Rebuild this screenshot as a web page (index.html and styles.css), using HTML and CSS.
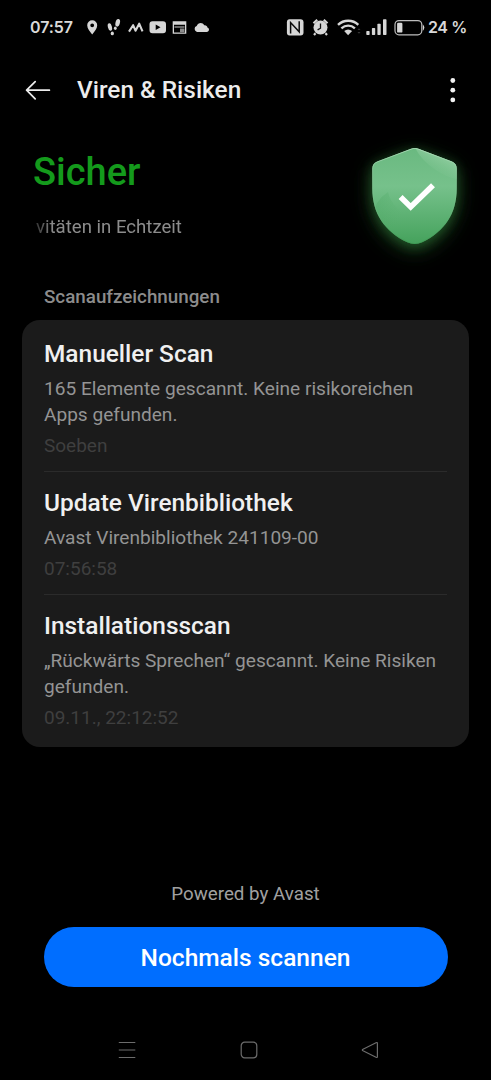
FILE: index.html
```html
<!DOCTYPE html>
<html lang="de">
<head>
<meta charset="utf-8">
<meta name="viewport" content="width=device-width, initial-scale=1">
<title>Viren &amp; Risiken</title>
<link rel="stylesheet" href="styles.css">
</head>
<body>
<div class="screen">
  <div class="status">
    <span class="clock">07:57</span>
    <svg class="status-left" width="126" height="24" viewBox="86 15 126 24" fill="#d6d6d6">
      <path fill-rule="evenodd" d="M92.200 20.200a5 5 0 0 1 5 5c0 3.300-2.700 6-5 9.200-2.300-3.200-5-5.900-5-9.200a5 5 0 0 1 5-5zm0 3.200a1.900 1.900 0 1 0 0 3.800 1.900 1.900 0 0 0 0-3.800z"/>
      <g>
        <ellipse cx="117.700" cy="22.800" rx="2.200" ry="3.900" transform="rotate(14 117.700 22.800)"/>
        <ellipse cx="115.300" cy="28.200" rx="1.400" ry="1.700"/>
        <ellipse cx="109.900" cy="27" rx="2" ry="3.900" transform="rotate(-14 109.900 27)"/>
        <ellipse cx="112.300" cy="33.400" rx="1.600" ry="1.900"/>
      </g>
      <path d="M129 31.600l4.100-6.400 2.400 5.500 3.700-7 3.300 7.600" fill="none" stroke="#d6d6d6" stroke-width="2.100" stroke-linejoin="round"/>
      <path fill-rule="evenodd" d="M152.500 21.300h10.500q3 0 3 3v6q0 3-3 3h-10.500q-3 0-3-3v-6q0-3 3-3zm3.200 3.300v5.400l4.800-2.700z"/>
      <path fill-rule="evenodd" d="M172.700 21.200h13.600v12.500h-13.600zm1.300 3.600v7.600h11v-7.600z"/>
      <path d="M174.500 26.200h10v1.500h-10zM180 28.500h4.500v3.400h-4.500z" opacity=".65"/>
      <path d="M197 31.900a3 3 0 0 1-.3-5.800c1.200-3.800 6-4.200 7.500-.9 1.900-.3 2.900.8 3.200 2.200 1.400.5 1.600 1.600 1.600 2.200 0 1.500-1 2.300-2.300 2.300z"/>
    </svg>
    <svg class="status-right" width="140" height="24" viewBox="285 15 140 24" fill="#d6d6d6">
      <path d="M289.500 19.200h11q3 0 3 3v10.200q0 3-3 3h-11q-2.600 0-2.600-3V22.200q0-3 2.600-3z"/>
      <path d="M290.600 33.400V22.600l8.600 9.200V21.200" fill="none" stroke="#0a0a0a" stroke-width="1.500"/>
      <circle cx="320.500" cy="27.600" r="7"/>
      <path d="M313.500 23.200l3.700-3.400M327.500 23.200l-3.700-3.400M315.500 33.300l-1.500 1.700M325.500 33.300l1.500 1.700" stroke="#d6d6d6" stroke-width="2.200"/>
      <path d="M320.500 23.400v4.800l-2.900 1.700" fill="none" stroke="#111" stroke-width="1.300"/>
      <path d="M338 24.800c5.700-5.500 14.700-5.500 20.300 0M341.400 28.300c4-3.600 9.600-3.600 13.500 0" fill="none" stroke="#d6d6d6" stroke-width="2.400"/>
      <path d="M344.200 31q3.900-3 7.900 0l-4 4.200z"/>
      <path d="M357.500 30l1.500-1.800 1.500 1.800zM357.500 32l1.500 1.800 1.500-1.800z" opacity=".25"/>
      <rect x="366.300" y="31" width="3.300" height="4" rx=".7"/>
      <rect x="371.900" y="28" width="3.300" height="7" rx=".7"/>
      <rect x="377.400" y="23.700" width="3.300" height="11.300" rx=".7"/>
      <rect x="383" y="19.300" width="3.500" height="15.700" rx=".7"/>
      <rect x="395" y="20.600" width="26.800" height="14.200" rx="4" fill="none" stroke="#bdbdbd" stroke-width="1.200"/>
      <rect x="397.100" y="22.800" width="5.300" height="9.800" rx="1.200"/>
      <path d="M422.800 24.200q3 3.300 0 6.700z"/>
    </svg>
    <span class="percent">24 %</span>
  </div>

  <header class="bar">
    <svg class="back" width="26" height="22" viewBox="0 0 26 22" fill="none" stroke="#ececec" stroke-width="1.700" stroke-linecap="round" stroke-linejoin="round"><path d="M10.200 2.600L1.600 11.200l8.600 8.600M1.600 11.200h22.800"/></svg>
    <h1 class="bar-title">Viren &amp; Risiken</h1>
    <svg class="more" width="8" height="26" viewBox="0 0 8 26" fill="#f2f2f2"><circle cx="3.800" cy="3.500" r="2.400"/><circle cx="3.800" cy="13.200" r="2.400"/><circle cx="3.800" cy="22.900" r="2.400"/></svg>
  </header>

  <section class="hero">
    <div class="hero-text">
      <div class="state">Sicher</div>
      <div class="ticker">vitäten in Echtzeit</div>
    </div>
    <svg class="shield" width="141" height="144" viewBox="350 126 141 144">
      <defs>
        <linearGradient id="body" x1="0" y1="0" x2="0" y2="1">
          <stop offset="0" stop-color="#6ab980"/><stop offset=".4" stop-color="#76c18b"/><stop offset="1" stop-color="#45a25c"/>
        </linearGradient>
        <linearGradient id="facet" gradientUnits="userSpaceOnUse" x1="437" y1="153" x2="427" y2="174">
          <stop offset="0" stop-color="#9ad3a8" stop-opacity=".7"/><stop offset="1" stop-color="#7cc38f" stop-opacity="0"/>
        </linearGradient>
        <linearGradient id="low" gradientUnits="userSpaceOnUse" x1="374" y1="204" x2="400" y2="218">
          <stop offset="0" stop-color="#3f9f58" stop-opacity=".25"/><stop offset="1" stop-color="#4caa62" stop-opacity="0"/>
        </linearGradient>
        <linearGradient id="edge" x1="0" y1="0" x2="0" y2="1">
          <stop offset="0" stop-color="#b4dfbf" stop-opacity=".9"/><stop offset=".4" stop-color="#8ccb9c" stop-opacity=".5"/><stop offset="1" stop-color="#3b9852" stop-opacity=".7"/>
        </linearGradient>
        <filter id="wide" x="-60%" y="-60%" width="220%" height="220%"><feGaussianBlur stdDeviation="11"/></filter>
        <filter id="near" x="-40%" y="-40%" width="180%" height="180%"><feGaussianBlur stdDeviation="6"/></filter>
        <path id="outline" d="M411 148.800q3.700-1.700 7.400 0l33.500 12.600q4.800 1.900 4.800 7v20c0 25-12 43-34.500 53.800q-7.500 3.400-15 0C384.700 231.400 372.300 213.400 372.300 188.400v-20q0-5.100 4.800-7z"/>
        <clipPath id="cut"><use href="#outline"/></clipPath>
      </defs>
      <use href="#outline" fill="#2a6a2d" opacity=".6" filter="url(#wide)" transform="translate(0 6)"/>
      <use href="#outline" fill="#2d7d3a" opacity=".5" filter="url(#near)" transform="translate(0 3)"/>
      <use href="#outline" fill="url(#body)"/>
      <g clip-path="url(#cut)">
        <path d="M414.700 147q6 13 21 23 12 8 22 9v-32z" fill="url(#facet)"/>
        <path d="M372 218q3-18 16-26 4 18 26.700 26v30h-43z" fill="url(#low)"/>
        <use href="#outline" fill="none" stroke="url(#edge)" stroke-width="1.600"/>
      </g>
      <path d="M400.600 197l10.100 9.900 22.300-21.700" fill="none" stroke="#fff" stroke-width="5.600"/>
    </svg>
  </section>

  <h2 class="label">Scanaufzeichnungen</h2>
  <main class="card">
    <article class="entry">
      <h3 class="entry-title">Manueller Scan</h3>
      <p class="entry-text">165 Elemente gescannt. Keine risikoreichen<br>Apps gefunden.</p>
      <p class="entry-time">Soeben</p>
    </article>
    <article class="entry">
      <h3 class="entry-title">Update Virenbibliothek</h3>
      <p class="entry-text">Avast Virenbibliothek 241109-00</p>
      <p class="entry-time">07:56:58</p>
    </article>
    <article class="entry">
      <h3 class="entry-title">Installationsscan</h3>
      <p class="entry-text">„Rückwärts Sprechen“ gescannt. Keine Risiken<br>gefunden.</p>
      <p class="entry-time">09.11., 22:12:52</p>
    </article>
  </main>

  <footer class="foot">
    <div class="powered">Powered by Avast</div>
    <button class="scan">Nochmals scannen</button>
  </footer>

  <nav class="nav">
    <svg width="18" height="18" viewBox="0 0 18 18" fill="none" stroke="#6c6c6c" stroke-width="1.200"><path d="M.8 1.500h16.500M.8 9h16.500M.8 16.500h16.500"/></svg>
    <svg width="18" height="18" viewBox="0 0 18 18" fill="none" stroke="#6c6c6c" stroke-width="1.200"><rect x="1.200" y="1.200" width="15.600" height="15.600" rx="3.500"/></svg>
    <svg width="18" height="18" viewBox="0 0 18 18" fill="none" stroke="#6c6c6c" stroke-width="1.200" stroke-linejoin="round"><path d="M2 8.200L15 1.700q1.400-.6 1.400.9v12.800q0 1.500-1.400.9L2 9.800q-1.400-.8 0-1.600z"/></svg>
  </nav>
</div>
</body>
</html>
```

FILE: styles.css
```css
* { box-sizing: border-box; }
body, h1, h2, h3, p { margin: 0; }
body { background: #000; font-family: Roboto, "Liberation Sans", sans-serif; }
svg { display: block; flex: none; }

.screen { display: flex; flex-direction: column; width: 491px; height: 1080px; overflow: hidden; background: #000; }

.status { display: flex; align-items: center; height: 54px; padding-left: 30px; color: #d9d9d9; font: 600 16px/24px Inter, Roboto, sans-serif; white-space: nowrap; }
.clock { width: 56px; letter-spacing: -0.1px; }
.status-right { margin-left: 73px; }
.percent { margin-left: 3px; letter-spacing: -0.4px; }

.bar { display: flex; align-items: center; height: 72px; padding: 0 34px 0 25px; }
.bar-title { flex: 1; margin-left: 26px; color: #ececec; font-size: 24.400px; font-weight: 500; line-height: 32px; }

.hero { display: flex; justify-content: space-between; height: 156px; padding-left: 33px; }
.hero-text { padding-top: 23px; }
.state { color: #149a1c; font-size: 38px; font-weight: 500; line-height: 46px; }
.ticker { margin-top: 19px; padding-left: 3px; color: #8c8c8c; font-size: 18.600px; line-height: 26px; -webkit-mask-image: linear-gradient(90deg, rgba(0, 0, 0, 0.25), #000 20px); mask-image: linear-gradient(90deg, rgba(0, 0, 0, 0.25), #000 20px); }

.label { height: 38px; padding: 2px 0 0 44px; color: #8c8c8c; font-size: 18.800px; font-weight: 500; line-height: 26px; }

.card { height: 427px; margin: 0 22px; padding: 3px 22px 0; border-radius: 18px; background: #1b1b1b; }
.entry { padding: 16px 0 12px; border-bottom: 1px solid #2b2b2b; }
.entry:last-child { border-bottom: 0; }
.entry-title { color: #f0f0f0; font-size: 24.450px; font-weight: 500; line-height: 30px; white-space: nowrap; }
.entry-text { margin-top: 7px; color: #949494; font-size: 19.080px; line-height: 26px; white-space: nowrap; }
.entry-time { margin: 5px 0 0; color: #3f3f3f; font-size: 19px; line-height: 26px; }

.foot { display: flex; flex-direction: column; align-items: center; margin-top: 134px; }
.powered { color: #a0a0a0; font-size: 18.750px; line-height: 26px; }
.scan { width: 404px; height: 60px; margin: 20px 0 0; padding: 1px 0 0; border: 0; border-radius: 30px; background: #006eff; color: #fff; font: 500 24.500px/32px Roboto, sans-serif; }

.nav { display: flex; justify-content: space-between; margin-top: 54px; padding: 0 112px 0 118px; }
```
